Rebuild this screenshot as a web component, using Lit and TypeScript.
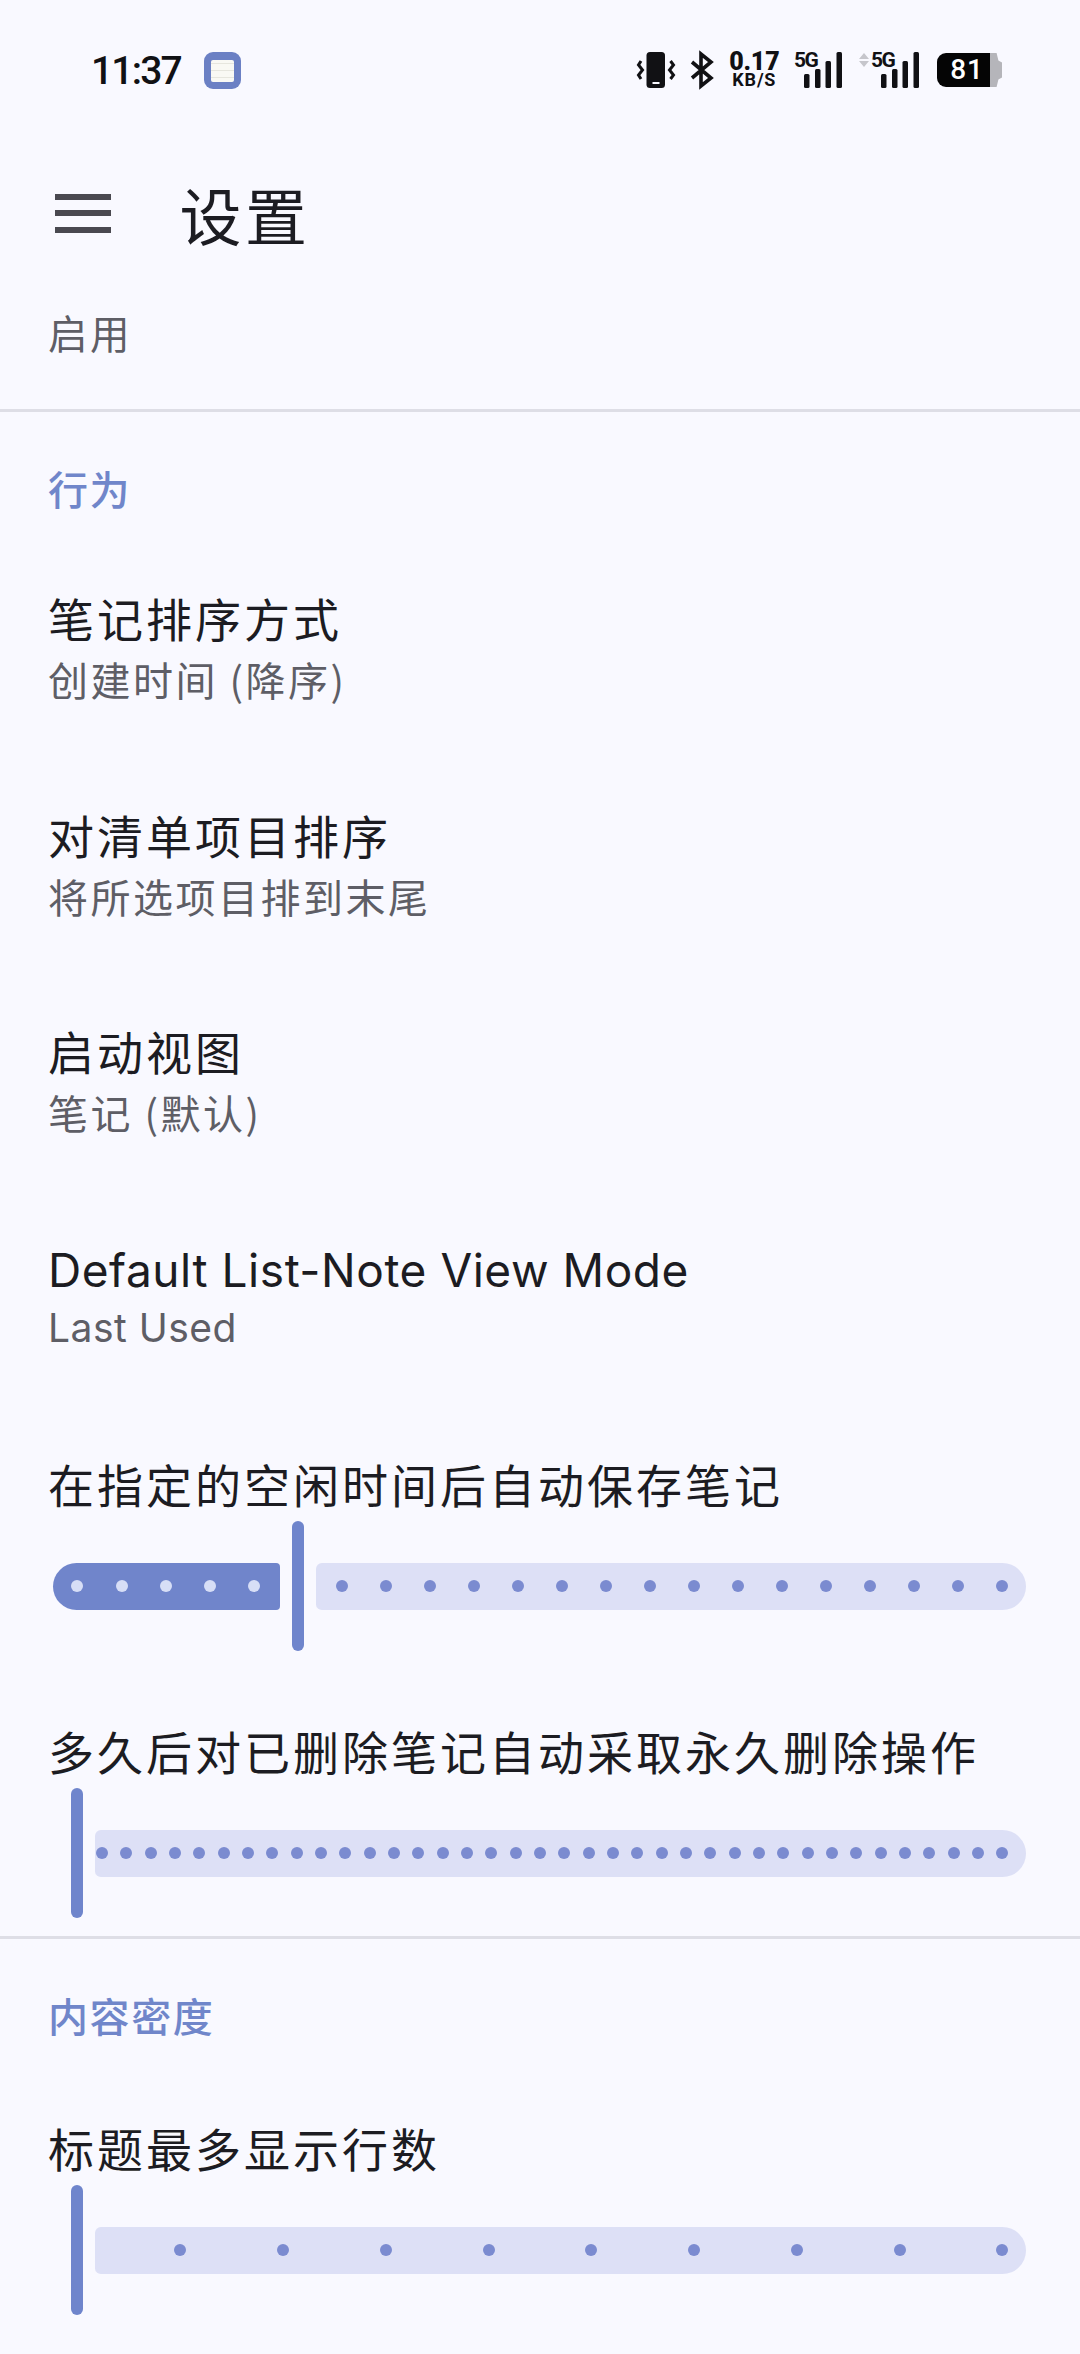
import { LitElement, html, css, svg } from 'lit';
import { customElement, property } from 'lit/decorators.js';

// slider geometry, in page pixels
const TRACK_LEFT = 53.4;
const FIRST_STOP = 77.5;
const LAST_STOP = 1002.5;

@customElement('stop-slider')
export class StopSlider extends LitElement {
  @property({ type: Number })
  stops = 2;

  @property({ type: Number })
  value = 0;

  static styles = css`
    :host {
      display: block;
      margin-top: 7px;
    }

    .slider {
      position: relative;
      display: flex;
      align-items: center;
      height: 130px;
      margin-left: 53.4px;
      width: 972.6px;
    }

    .active,
    .inactive {
      height: 47px;
    }

    .active {
      flex: none;
      background: #7085cb;
      border-radius: 24px 4px 4px 24px;
    }

    .active.empty {
      background: none;
    }

    .thumb {
      flex: none;
      width: 12px;
      height: 130px;
      margin: 0 12px;
      border-radius: 6px;
      background: #6f85cc;
    }

    .inactive {
      flex: 1;
      background: #dde0f6;
      border-radius: 6px 24px 24px 6px;
    }

    .dot {
      position: absolute;
      top: 59px;
      width: 12px;
      height: 12px;
      border-radius: 50%;
      background: #7b8bd0;
    }

    .dot.on {
      background: #d7def6;
    }
  `;

  render() {
    const step = (LAST_STOP - FIRST_STOP) / (this.stops - 1);
    const center = FIRST_STOP + this.value * step;
    const activeWidth = center - TRACK_LEFT - 18;
    const dots = [];
    for (let i = 0; i < this.stops; i++) {
      if (i === this.value) continue;
      const left = FIRST_STOP + i * step - TRACK_LEFT - 6;
      dots.push(html`<span class="dot ${i < this.value ? 'on' : ''}" style="left:${left}px"></span>`);
    }
    return html`
      <div class="slider">
        <div class="active ${this.value === 0 ? 'empty' : ''}" style="width:${activeWidth}px"></div>
        <div class="thumb"></div>
        <div class="inactive"></div>
        ${dots}
      </div>
    `;
  }
}

const signal = (arrows: boolean) => svg`
  <svg class="sig" width="${arrows ? 62 : 50}" height="36" viewBox="${arrows ? -12 : 0} 0 ${arrows ? 62 : 50} 36">
    ${arrows ? svg`<path d="M-7 1l5 6h-10zM-7 15l5-6h-10z" fill="#c6c6cc"/>` : ''}
    <text x="0" y="15.3" class="five">5G</text>
    <rect x="10" y="22" width="5.5" height="14" rx="1.5"/>
    <rect x="21" y="17" width="5.5" height="19" rx="1.5"/>
    <rect x="31.5" y="9" width="5.5" height="27" rx="1.5"/>
    <rect x="42.5" y="0" width="5.5" height="36" rx="1.5"/>
  </svg>
`;

@customElement('app-root')
export class AppRoot extends LitElement {
  static styles = css`
    :host {
      display: block;
      width: 1080px;
      height: 2354px;
      overflow: hidden;
      background: #f9f9ff;
      font-family: "Noto Sans CJK SC", sans-serif;
    }

    /* status bar */
    .status {
      display: flex;
      align-items: flex-start;
      height: 145px;
      padding: 52px 0 0 91px;
      box-sizing: border-box;
      color: #111114;
    }

    .time {
      font: 500 39px/38px Roboto, sans-serif;
      letter-spacing: -1.8px;
      width: 113px;
    }

    .app-badge {
      width: 37px;
      height: 37px;
      border-radius: 9px;
      background: #6b80c4;
      display: flex;
      align-items: center;
      justify-content: center;
    }

    .app-badge div {
      width: 23px;
      height: 22px;
      border-radius: 2px;
      background: repeating-linear-gradient(#f9f9f4 0 3px, #e6e6de 3px 4px, #f9f9f4 4px 7px);
    }

    .icons {
      display: flex;
      align-items: flex-start;
      margin-left: auto;
      margin-right: 78px;
    }

    .icons svg {
      display: block;
      flex: none;
      fill: #111114;
      overflow: visible;
    }

    .five {
      font: 700 21px Roboto, sans-serif;
      letter-spacing: -1.5px;
    }

    .speed {
      display: flex;
      flex-direction: column;
      align-items: center;
      width: 52px;
      margin: 0 14px;
      font-family: Roboto, sans-serif;
      font-weight: 700;
    }

    .speed b {
      font-size: 25px;
      line-height: 20px;
      letter-spacing: -0.2px;
    }

    .speed span {
      font-size: 18px;
      line-height: 16px;
      letter-spacing: 0.8px;
    }

    .gap {
      width: 14.7px;
    }

    .battery {
      display: flex;
      margin-left: 16px;
      margin-top: 1px;
    }

    .battery .fill {
      width: 53px;
      height: 34px;
      background: #050505;
      border-radius: 9px 0 0 9px;
      color: #fff;
      font: 500 28px/34px Roboto, sans-serif;
      letter-spacing: 1px;
      text-align: right;
      padding-right: 6px;
      box-sizing: border-box;
    }

    .battery .rest {
      width: 12px;
      height: 34px;
      background: #b5b5ba;
      clip-path: polygon(0 0, 55% 0, 70% 22%, 100% 28%, 100% 72%, 70% 78%, 55% 100%, 0 100%);
    }

    /* app bar */
    .bar {
      display: flex;
      align-items: center;
      height: 146px;
      padding-left: 55px;
      box-sizing: border-box;
    }

    .menu {
      display: flex;
      flex-direction: column;
      gap: 10.5px;
      width: 56px;
      margin-top: -10px;
    }

    .menu i {
      display: block;
      height: 6px;
      background: #4a4950;
    }

    .bar h1 {
      margin: -8px 0 0 68.5px;
      font-size: 62px;
      line-height: 80px;
      font-weight: 400;
      letter-spacing: 3.5px;
      color: #1c1c22;
    }

    /* settings list */
    .lead {
      height: 118px;
      padding: 13px 48px 0;
      box-sizing: border-box;
      font-size: 39.5px;
      line-height: 56px;
      letter-spacing: 2.6px;
      color: #5e5e66;
    }

    .divider {
      height: 3px;
      background: #dedee6;
    }

    .section {
      height: 134px;
      padding: 48px 48px 0;
      box-sizing: border-box;
      font-size: 40px;
      line-height: 56px;
      letter-spacing: 1.6px;
      font-weight: 500;
      color: #7086ca;
    }

    .section.above-slider {
      height: 177px;
    }

    .row {
      height: 216.5px;
      padding: 40px 48px 0;
      box-sizing: border-box;
    }

    .title {
      font-size: 46px;
      line-height: 62px;
      letter-spacing: 3px;
      color: #1c1c22;
    }

    .row .sub {
      margin-top: 6px;
      font-size: 40px;
      line-height: 50px;
      letter-spacing: 2.5px;
      color: #5e5e66;
    }

    .row .title.latin {
      font-family: Inter, "Noto Sans CJK SC", sans-serif;
      letter-spacing: 0.55px;
      padding-top: 3px;
    }

    .row .sub.latin {
      font-family: Inter, "Noto Sans CJK SC", sans-serif;
      font-size: 39px;
      letter-spacing: 0.5px;
      margin-top: 2px;
    }

    .slider-row .title {
      padding: 0 48px;
    }

    .slider-row.first {
      padding-top: 40px;
    }

    .slider-row.next {
      padding-top: 68px;
    }

    .divider.closing {
      margin-top: 18px;
    }
  `;

  render() {
    const rows = [
      ['笔记排序方式', '创建时间 (降序)', false],
      ['对清单项目排序', '将所选项目排到末尾', false],
      ['启动视图', '笔记 (默认)', false],
      ['Default List-Note View Mode', 'Last Used', true],
    ] as const;

    return html`
      <div class="status">
        <div class="time">11:37</div>
        <div class="app-badge"><div></div></div>
        <div class="icons">
          <svg width="38" height="36" viewBox="0 0 38 36">
            <rect x="9.500" y="0" width="18.500" height="36" rx="3.500"/>
            <rect x="15.500" y="30" width="7" height="2" fill="#f9f9ff"/>
            <path d="M4 9L1.500 13l4 5-4 5 2.500 4M33.500 9l3 4-4 5 4 5-3 4" fill="none" stroke="#111114" stroke-width="3"/>
          </svg>
          <svg width="24" height="36" viewBox="0 0 24 36" style="margin-left:15px">
            <path d="M2 10l19 16-10 8V2l10 8L2 26" fill="none" stroke="#111114" stroke-width="3.600"/>
          </svg>
          <div class="speed"><b>0.17</b><span>KB/S</span></div>
          ${signal(false)}
          <div class="gap"></div>
          ${signal(true)}
          <div class="battery">
            <div class="fill">81</div>
            <div class="rest"></div>
          </div>
        </div>
      </div>

      <div class="bar">
        <div class="menu"><i></i><i></i><i></i></div>
        <h1>设置</h1>
      </div>

      <div class="lead">启用</div>
      <div class="divider"></div>
      <div class="section">行为</div>

      ${rows.map(([title, sub, latin]) => html`
        <div class="row">
          <div class="title ${latin ? 'latin' : ''}">${title}</div>
          <div class="sub ${latin ? 'latin' : ''}">${sub}</div>
        </div>
      `)}

      <div class="slider-row first">
        <div class="title">在指定的空闲时间后自动保存笔记</div>
        <stop-slider .stops=${22} .value=${5}></stop-slider>
      </div>
      <div class="slider-row next">
        <div class="title">多久后对已删除笔记自动采取永久删除操作</div>
        <stop-slider .stops=${39} .value=${0}></stop-slider>
      </div>
      <div class="divider closing"></div>
      <div class="section above-slider">内容密度</div>
      <div class="slider-row">
        <div class="title">标题最多显示行数</div>
        <stop-slider .stops=${10} .value=${0}></stop-slider>
      </div>
    `;
  }
}
